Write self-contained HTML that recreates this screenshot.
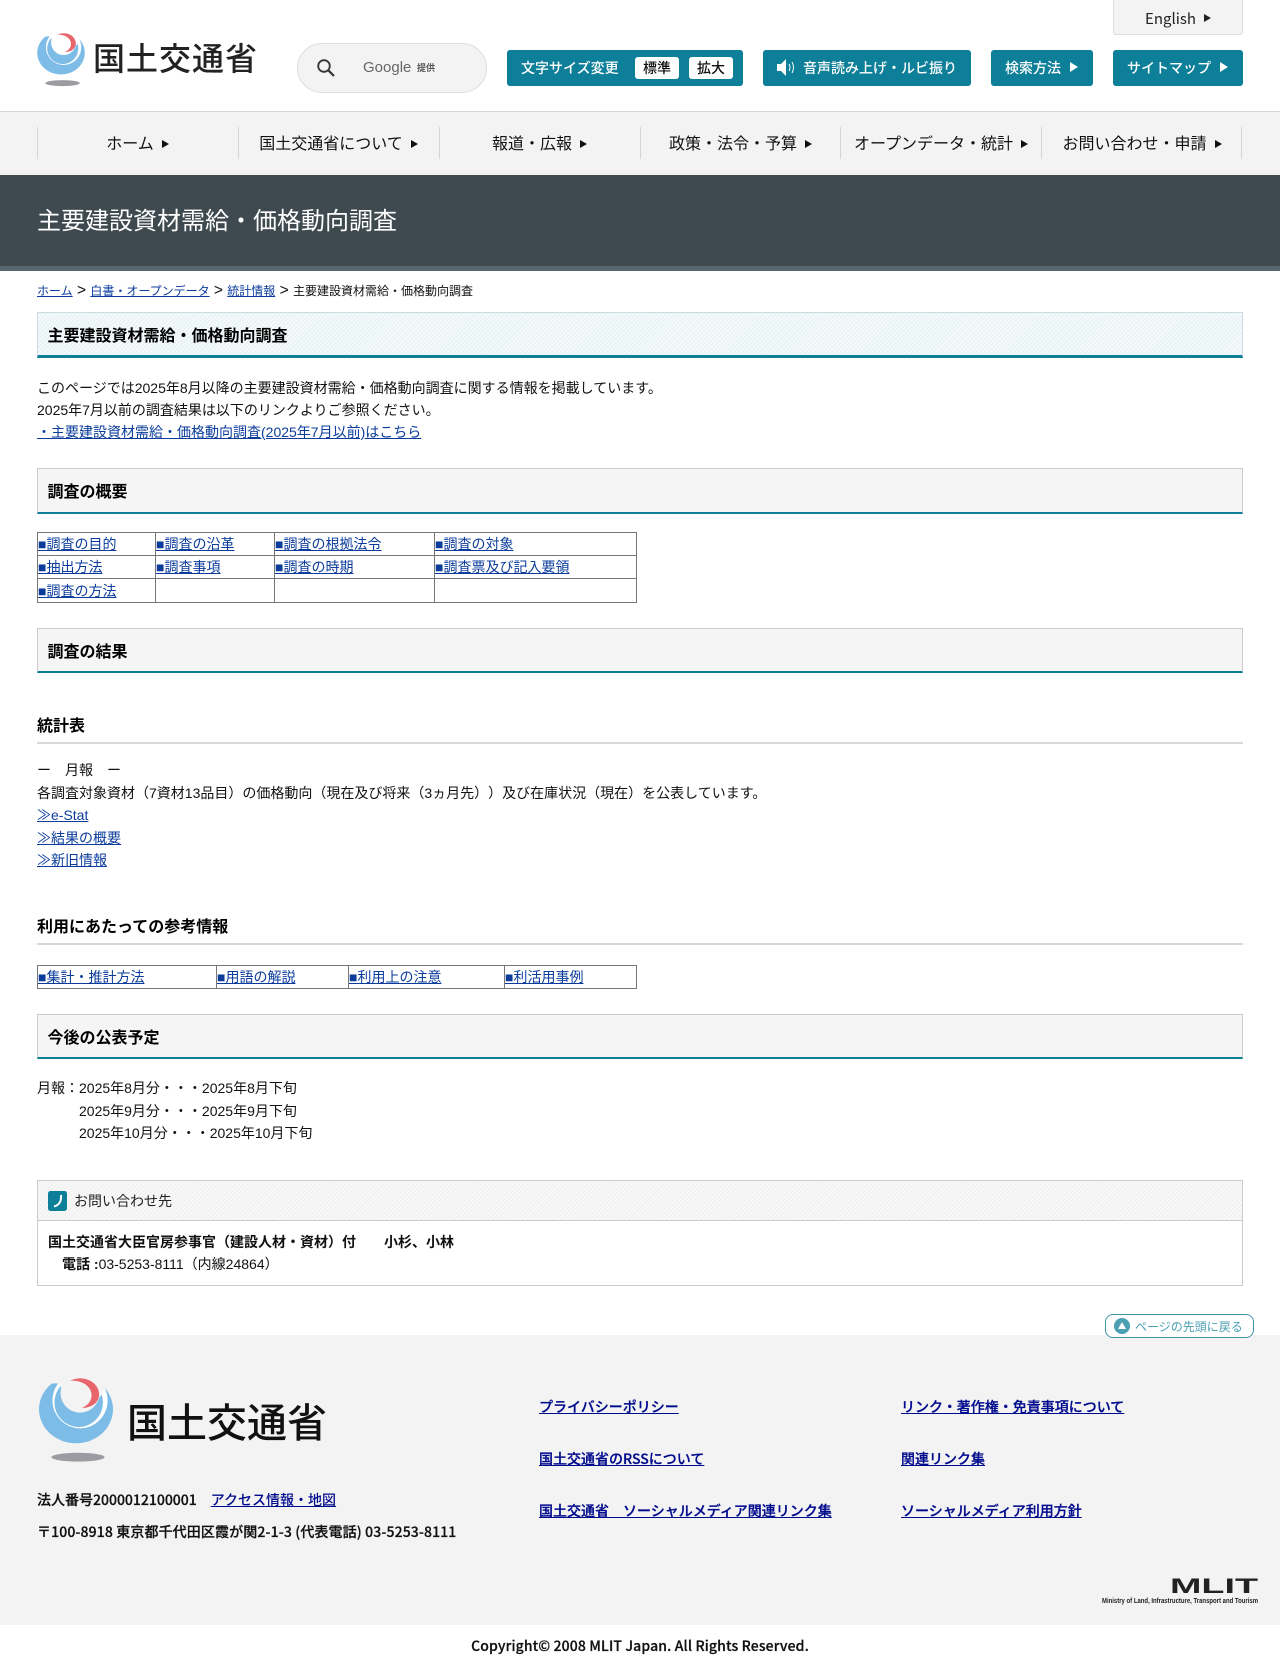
<!DOCTYPE html>
<html lang="ja"><head><meta charset="utf-8"><title>主要建設資材需給・価格動向調査</title>
<style>
html,body{margin:0;padding:0;background:#fff}
body{position:relative;width:1280px;height:1677px;overflow:hidden;font-family:"Liberation Sans","Noto Sans CJK JP",sans-serif;text-spacing-trim:space-all;font-feature-settings:"chws" 0;font-size:14px;color:#111}
.a{position:absolute;white-space:nowrap}
.n{font-family:"Noto Sans CJK JP",sans-serif}
a{color:#0b3c9c;text-decoration:underline}
.btn{position:absolute;top:50px;height:36px;background:#0e7f98;border-radius:3px;color:#fff;font-family:"Noto Sans CJK JP",sans-serif;font-weight:500;font-size:14px;line-height:37px;white-space:nowrap}
.tri{display:inline-block;width:0;height:0;border-left:8px solid currentColor;border-top:5px solid transparent;border-bottom:5px solid transparent;vertical-align:1px;margin-left:9px}
.sep{position:absolute;top:127px;height:32px;width:1px;background:#d5d5d5}
.nv{position:absolute;top:125px;height:34px;line-height:34px;text-align:center;font-family:"Noto Sans CJK JP",sans-serif;font-size:16px;color:#111;white-space:nowrap}
.nv .tri{border-left-width:7.5px;border-top-width:4.5px;border-bottom-width:4.5px;margin-left:8px;color:#111}
.h2{position:absolute;left:37px;width:1206px;box-sizing:border-box;border:1px solid #ccc;border-bottom:2px solid #0e7f98;background:#f5f5f5;font-weight:bold;font-size:16px;padding-left:9.5px;color:#000}
.h3{position:absolute;left:37px;width:1206px;box-sizing:border-box;border-bottom:2px solid #d9d9d9;font-weight:bold;font-size:16px;color:#000;height:34px;line-height:34px}
table{position:absolute;left:37px;border-collapse:collapse;table-layout:fixed;font-size:14px}
td{border:1px solid #777;padding:0;vertical-align:middle;line-height:20px;white-space:nowrap}
.fl{font-family:"Noto Sans CJK JP",sans-serif;font-weight:500;font-size:14px;color:#000a8c;-webkit-text-stroke:.25px #000a8c}
.ft{font-family:"Noto Sans CJK JP",sans-serif;font-weight:500;font-size:14px;color:#111;-webkit-text-stroke:.25px #111}
.s{font-size:15.5px}
</style></head><body>

<!-- header -->
<div class="a n" style="left:1113px;top:-1px;width:128px;height:34px;background:#f3f3f3;border:1px solid #ddd;border-radius:0 0 3px 3px;text-align:center;line-height:37px;font-size:15px;color:#222">English<span class="tri" style="border-left-width:7px;border-top-width:4.5px;border-bottom-width:4.5px;margin-left:8px;vertical-align:2px"></span></div>

<svg class="a" style="left:37px;top:33px;overflow:visible" width="48" height="54" viewBox="0 0 220 250">
<ellipse cx="110" cy="92" rx="110" ry="100" fill="#7cbce6"/>
<circle cx="122" cy="66" r="82" fill="#fff"/>
<circle cx="118" cy="72" r="72" fill="#7cbce6"/>
<circle cx="130" cy="14" r="66" fill="#fff"/>
<rect x="0" y="-20" width="220" height="36" fill="#fff"/>
<circle cx="122" cy="44" r="58" fill="#fff"/>
<path d="M92 8C125-8 170 4 178 41 183 68 160 88 128 88 150 78 160 61 155 41 148 18 120 6 92 8Z" fill="#e8656c"/>
<ellipse cx="117" cy="232" rx="80" ry="14" fill="#9a9ca2"/>
</svg>
<div class="a n" style="left:93px;top:35px;font-size:32px;line-height:44px;letter-spacing:1px;color:#222;font-weight:500">国土交通省</div>

<div class="a" style="left:297px;top:43px;width:190px;height:50px;box-sizing:border-box;background:#f3f3f3;border:1px solid #ddd;border-radius:25px"></div>
<svg class="a" style="left:316px;top:58px" width="20" height="20" viewBox="0 0 20 20"><circle cx="8" cy="8" r="5.8" fill="none" stroke="#333" stroke-width="1.8"/><path d="M12.3 12.3L18 18" stroke="#333" stroke-width="2.2"/></svg>
<div class="a" style="left:363px;top:57px;font-size:15px;line-height:22px;color:#666;font-family:'Liberation Sans',sans-serif">Google</div>
<div class="a n" style="left:417px;top:60px;font-size:9px;line-height:16px;color:#555;font-weight:700">提供</div>

<div class="btn" style="left:507px;width:236px"><span style="position:absolute;left:14px">文字サイズ変更</span>
<span style="position:absolute;left:128px;top:7px;width:44px;height:22px;background:#fff;border-radius:3px;color:#111;text-align:center;line-height:23px;font-size:14px">標準</span>
<span style="position:absolute;left:182px;top:7px;width:44px;height:22px;background:#fff;border-radius:3px;color:#111;text-align:center;line-height:23px;font-size:14px">拡大</span></div>
<div class="btn" style="left:763px;width:208px">
<svg style="position:absolute;left:13px;top:8px" width="20" height="19" viewBox="0 0 20 19"><path d="M1 6H5L10 1V18L5 13H1Z" fill="#fff"/><path d="M13 6Q15 9.500 13 13M16 4Q19 9.500 16 15" stroke="#fff" fill="none" stroke-width="1"/></svg>
<span style="position:absolute;left:40px">音声読み上げ・ルビ振り</span></div>
<div class="btn" style="left:991px;width:102px"><span style="position:absolute;left:14px">検索方法<span class="tri"></span></span></div>
<div class="btn" style="left:1113px;width:130px"><span style="position:absolute;left:14px">サイトマップ<span class="tri"></span></span></div>

<!-- nav -->
<div class="a" style="left:0;top:111px;width:1280px;height:64px;background:#f3f3f3;border-top:1px solid #d9d9d9;box-sizing:border-box"></div>
<div class="sep" style="left:37px"></div><div class="sep" style="left:238px"></div><div class="sep" style="left:439px"></div><div class="sep" style="left:640px"></div><div class="sep" style="left:840px"></div><div class="sep" style="left:1041px"></div><div class="sep" style="left:1241px"></div>
<div class="nv" style="left:38px;width:199px">ホーム<span class="tri"></span></div>
<div class="nv" style="left:239px;width:199px">国土交通省について<span class="tri"></span></div>
<div class="nv" style="left:440px;width:199px">報道・広報<span class="tri"></span></div>
<div class="nv" style="left:641px;width:199px">政策・法令・予算<span class="tri"></span></div>
<div class="nv" style="left:841px;width:200px">オープンデータ・統計<span class="tri"></span></div>
<div class="nv" style="left:1042px;width:200px">お問い合わせ・申請<span class="tri"></span></div>

<!-- title band -->
<div class="a" style="left:0;top:175px;width:1280px;height:91px;background:#3e4a50"></div>
<div class="a" style="left:0;top:266px;width:1280px;height:5px;background:#57656c"></div>
<div class="a n" style="left:37px;top:201px;font-size:24px;line-height:36px;color:#fff">主要建設資材需給・価格動向調査</div>

<!-- breadcrumb -->
<div class="a" style="left:37px;top:282px;font-size:12px;line-height:18px"><a href="#">ホーム</a><span class="s"> &gt; </span><a href="#">白書・オープンデータ</a><span class="s"> &gt; </span><a href="#">統計情報</a><span class="s"> &gt; </span>主要建設資材需給・価格動向調査</div>

<div class="h2" style="top:312px;height:46px;line-height:47px;border-color:#c9dde1;border-bottom:3px solid #0e7f98;background:repeating-linear-gradient(135deg,#e6f2f4 0 1.500px,#f8fbfc 1.500px 3px)">主要建設資材需給・価格動向調査</div>

<div class="a" style="left:37px;top:377px;line-height:22px">このページでは2025年8月以降の主要建設資材需給・価格動向調査に関する情報を掲載しています。<br>2025年7月以前の調査結果は以下のリンクよりご参照ください。<br><a href="#">・主要建設資材需給・価格動向調査(2025年7月以前)はこちら</a></div>

<div class="h2" style="top:468px;height:46px;line-height:48px">調査の概要</div>

<table style="top:532px;width:599px">
<colgroup><col style="width:118px"><col style="width:119px"><col style="width:160px"><col style="width:202px"></colgroup>
<tr style="height:23px"><td><a href="#">■調査の目的</a></td><td><a href="#">■調査の沿革</a></td><td><a href="#">■調査の根拠法令</a></td><td><a href="#">■調査の対象</a></td></tr>
<tr style="height:23px"><td><a href="#">■抽出方法</a></td><td><a href="#">■調査事項</a></td><td><a href="#">■調査の時期</a></td><td><a href="#">■調査票及び記入要領</a></td></tr>
<tr style="height:24px"><td><a href="#">■調査の方法</a></td><td></td><td></td><td></td></tr>
</table>

<div class="h2" style="top:628px;height:45px;line-height:47px">調査の結果</div>

<div class="h3" style="top:710px">統計表</div>
<div class="a" style="left:37px;top:759px;line-height:22px">ー　月報　ー</div>
<div class="a" style="left:37px;top:782px;line-height:22px">各調査対象資材（7資材13品目）の価格動向（現在及び将来（3ヵ月先））及び在庫状況（現在）を公表しています。</div>
<div class="a" style="left:37px;top:804px;line-height:22px"><a href="#">≫e-Stat</a></div>
<div class="a" style="left:37px;top:827px;line-height:22px"><a href="#">≫結果の概要</a></div>
<div class="a" style="left:37px;top:849px;line-height:22px"><a href="#">≫新旧情報</a></div>

<div class="h3" style="top:911px">利用にあたっての参考情報</div>

<table style="top:965px;width:599px">
<colgroup><col style="width:179px"><col style="width:132px"><col style="width:156px"><col style="width:132px"></colgroup>
<tr style="height:23px"><td><a href="#">■集計・推計方法</a></td><td><a href="#">■用語の解説</a></td><td><a href="#">■利用上の注意</a></td><td><a href="#">■利活用事例</a></td></tr>
</table>

<div class="h2" style="top:1014px;height:45px;line-height:47px">今後の公表予定</div>

<div class="a" style="left:37px;top:1077px;line-height:22px">月報：2025年8月分・・・2025年8月下旬</div>
<div class="a" style="left:79px;top:1100px;line-height:22px">2025年9月分・・・2025年9月下旬</div>
<div class="a" style="left:79px;top:1122px;line-height:22px">2025年10月分・・・2025年10月下旬</div>

<!-- contact -->
<div class="a" style="left:37px;top:1180px;width:1206px;height:106px;box-sizing:border-box;border:1px solid #ccc"></div>
<div class="a" style="left:37px;top:1180px;width:1206px;height:41px;box-sizing:border-box;border:1px solid #ccc;background:repeating-linear-gradient(135deg,#f0f0f0 0 1.500px,#fafafa 1.500px 3px)"></div>
<svg class="a" style="left:48px;top:1191px" width="19" height="20" viewBox="0 0 19 20"><rect width="19" height="20" rx="2.500" fill="#0e7f98"/><path d="M13 4C13.500 9 12 14 6 15.500" fill="none" stroke="#fff" stroke-width="2"/></svg>
<div class="a" style="left:74px;top:1190px;line-height:22px;color:#222">お問い合わせ先</div>
<div class="a" style="left:48px;top:1231px;line-height:22px"><b>国土交通省大臣官房参事官（建設人材・資材）付　　小杉、小林</b><br><span style="margin-left:14px"><b>電話 :</b>03-5253-8111（内線24864）</span></div>

<!-- footer -->
<div class="a" style="left:0;top:1335px;width:1280px;height:290px;background:#f3f3f3"></div>
<div class="a" style="left:1105px;top:1314px;width:149px;height:24px;box-sizing:border-box;background:#fff;border:1px solid #3f94a8;border-radius:8px"></div>
<svg class="a" style="left:1114px;top:1318px" width="16" height="16" viewBox="0 0 16 16"><circle cx="8" cy="8" r="8" fill="#4a9fb3"/><path d="M8 4L12 11H4Z" fill="#fff"/></svg>
<div class="a n" style="left:1135px;top:1318px;font-size:12px;line-height:18px;color:#4a9fb3">ページの先頭に戻る</div>

<svg class="a" style="left:38.5px;top:1378px;overflow:visible" width="74" height="85" viewBox="0 0 220 250" preserveAspectRatio="none">
<ellipse cx="110" cy="92" rx="110" ry="100" fill="#7cbce6"/>
<circle cx="122" cy="66" r="82" fill="#fff"/>
<circle cx="118" cy="72" r="72" fill="#7cbce6"/>
<circle cx="130" cy="14" r="66" fill="#f3f3f3"/>
<rect x="0" y="-20" width="220" height="36" fill="#f3f3f3"/>
<circle cx="122" cy="44" r="58" fill="#f3f3f3"/>
<path d="M92 8C125-8 170 4 178 41 183 68 160 88 128 88 150 78 160 61 155 41 148 18 120 6 92 8Z" fill="#e8656c"/>
<ellipse cx="116" cy="233" rx="79" ry="13" fill="#9a9ca2"/>
</svg>
<div class="a n" style="left:127px;top:1391px;font-size:40px;line-height:58px;color:#111;font-weight:500">国土交通省</div>

<div class="a ft" style="left:37px;top:1489px;line-height:22px">法人番号2000012100001　<a href="#" style="color:#000a8c;-webkit-text-stroke:0">アクセス情報・地図</a></div>
<div class="a ft" style="left:37px;top:1521px;line-height:22px;letter-spacing:.12px">〒100-8918 東京都千代田区霞が関2-1-3 (代表電話) 03-5253-8111</div>

<a class="a fl" href="#" style="left:539px;top:1396px;line-height:22px">プライバシーポリシー</a>
<a class="a fl" href="#" style="left:539px;top:1448px;line-height:22px">国土交通省のRSSについて</a>
<a class="a fl" href="#" style="left:539px;top:1500px;line-height:22px">国土交通省　ソーシャルメディア関連リンク集</a>
<a class="a fl" href="#" style="left:901px;top:1396px;line-height:22px">リンク・著作権・免責事項について</a>
<a class="a fl" href="#" style="left:901px;top:1448px;line-height:22px">関連リンク集</a>
<a class="a fl" href="#" style="left:901px;top:1500px;line-height:22px">ソーシャルメディア利用方針</a>

<svg class="a" style="left:1100px;top:1570px" width="165" height="40" viewBox="0 0 165 40">
<text x="70" y="23" font-family="Liberation Sans" font-weight="bold" font-size="21" fill="#222" textLength="88" lengthAdjust="spacingAndGlyphs">MLIT</text>
<text x="2" y="33" font-family="Liberation Sans" font-weight="bold" font-size="7" fill="#222" textLength="156" lengthAdjust="spacingAndGlyphs">Ministry of Land, Infrastructure, Transport and Tourism</text>
</svg>

<div class="a n" style="left:0;top:1635px;width:1280px;text-align:center;font-size:14px;letter-spacing:.13px;line-height:22px;font-weight:500;color:#111;-webkit-text-stroke:.25px #111">Copyright© 2008 MLIT Japan. All Rights Reserved.</div>
</body></html>
